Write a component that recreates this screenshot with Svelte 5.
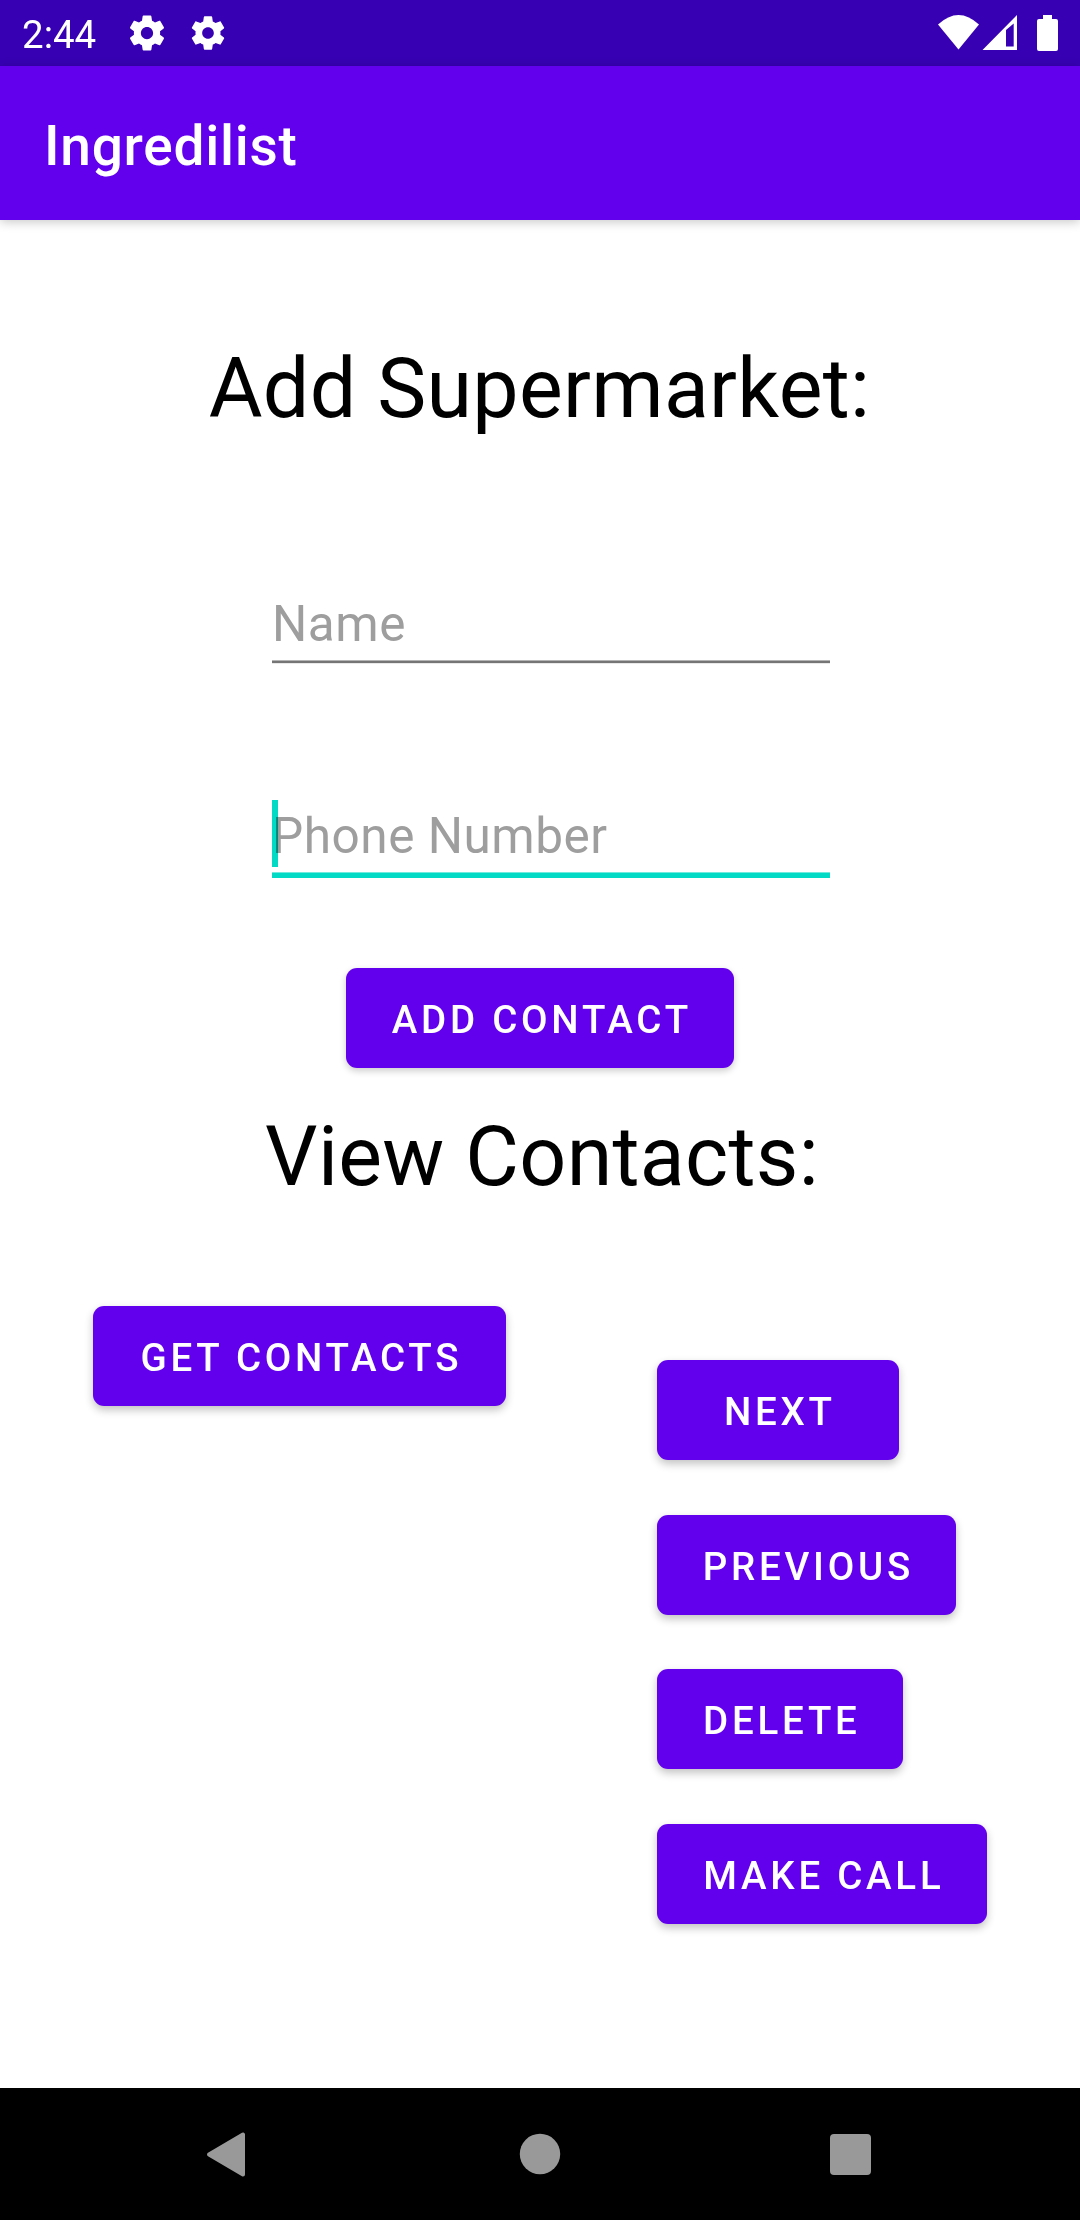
<script>
  let name = $state('');
  let phone = $state('');
  const actions = [
    { label: 'Next', kind: 'next' },
    { label: 'Previous', kind: 'previous' },
    { label: 'Delete', kind: 'delete' },
    { label: 'Make call', kind: 'call' }
  ];
  const gear =
    'M19.43 12.98c.04-.32.07-.64.07-.98s-.03-.66-.07-.98l2.11-1.65c.19-.15.24-.42.12-.64l-2-3.46c-.12-.22-.39-.3-.61-.22l-2.49 1c-.52-.4-1.08-.73-1.69-.98l-.38-2.65C14.46 2.18 14.25 2 14 2h-4c-.25 0-.46.18-.49.42l-.38 2.65c-.61.25-1.17.59-1.69.98l-2.49-1c-.23-.09-.49 0-.61.22l-2 3.46c-.13.22-.07.49.12.64l2.11 1.65c-.04.32-.07.65-.07.98s.03.66.07.98l-2.11 1.65c-.19.15-.24.42-.12.64l2 3.46c.12.22.39.3.61.22l2.49-1c.52.4 1.08.73 1.69.98l.38 2.65c.03.24.24.42.49.42h4c.25 0 .46-.18.49-.42l.38-2.65c.61-.25 1.17-.59 1.69-.98l2.49 1c.23.09.49 0 .61-.22l2-3.46c.12-.22.07-.49-.12-.64l-2.11-1.65zM12 15.5c-1.93 0-3.5-1.57-3.5-3.5s1.57-3.5 3.5-3.5 3.5 1.57 3.5 3.5-1.57 3.5-3.5 3.5z';
</script>

<div class="screen">
  <div class="status">
    <span class="time">2:44</span>
    <svg class="gear" viewBox="0 0 24 24"><path d={gear} /></svg>
    <svg class="gear small" viewBox="0 0 24 24"><path d={gear} /></svg>
    <svg class="system" viewBox="0 0 120 36">
      <path d="M0 9.5Q20.500 -9.500 41 9.500L20.500 34.500Z" />
      <path fill-rule="evenodd" d="M44.500 35L79 0V35ZM68 15V31.500H75.700V8.500Z" />
      <path d="M105 0H114V4H118Q120 4 120 6V34Q120 36 118 36H101Q99 36 99 34V6Q99 4 101 4H105Z" />
    </svg>
  </div>

  <header><h1>Ingredilist</h1></header>

  <main>
    <h2>Add Supermarket:</h2>
    <div class="field name">
      <input aria-label="Name" placeholder="Name" bind:value={name} />
    </div>
    <div class="field phone">
      <input aria-label="Phone Number" placeholder="Phone Number" bind:value={phone} />
      <i class="caret"></i>
    </div>
    <button class="add">Add contact</button>
    <h2 class="view">View Contacts:</h2>
    <div class="contacts">
      <button class="get">Get contacts</button>
      <div class="actions">
        {#each actions as action}
          <button class={action.kind}>{action.label}</button>
        {/each}
      </div>
    </div>
  </main>

  <nav>
    <svg viewBox="0 0 48 48"><path d="M37 4.500V44.500L3 24.500Z" stroke="#999" stroke-width="4" stroke-linejoin="round" /></svg>
    <svg viewBox="0 0 48 48"><circle cx="24" cy="24" r="20.2" /></svg>
    <svg viewBox="0 0 48 48"><rect x="4" y="4" width="41" height="41" rx="4" /></svg>
  </nav>
</div>

<style>
  :global(body) { margin: 0; background: #fff; }
  .screen {
    width: 1080px;
    height: 2220px;
    display: flex;
    flex-direction: column;
    overflow: hidden;
    background: #fff;
    font-family: Roboto, sans-serif;
  }
  .status {
    height: 66px;
    box-sizing: border-box;
    flex: none;
    display: flex;
    align-items: center;
    padding: 0 22px;
    background: #3700b3;
    color: #fff;
    fill: #fff;
  }
  .time { width: 103.500px; font-size: 38.500px; line-height: 46px; padding-top: 3px; }
  .gear { width: 42px; height: 42px; }
  .gear.small { width: 40px; height: 40px; margin-left: 20px; }
  .system { width: 120px; height: 36px; margin-left: auto; }
  header {
    height: 154px;
    flex: none;
    display: flex;
    align-items: center;
    padding: 6px 44px 0;
    box-sizing: border-box;
    background: #6200ee;
    color: #fff;
    box-shadow: 0 2px 10px rgba(0, 0, 0, .22);
  }
  h1 { margin: 0; font-size: 55px; line-height: 64px; font-weight: 500; letter-spacing: .750px; }
  main { height: 1868px; flex: none; display: flex; flex-direction: column; align-items: center; }
  h2 {
    margin: 114px 1px 0 0;
    height: 110px;
    font-size: 82.500px;
    line-height: 110px;
    font-weight: 400;
    letter-spacing: .300px;
    color: #000;
    white-space: nowrap;
  }
  .field { position: relative; width: 558px; margin-left: 22px; box-sizing: border-box; }
  .name {
    margin-top: 136px;
    height: 83px;
    border-bottom: 2px solid #757575;
    box-shadow: inset 0 -1px #b4b4b4, 0 1px #e9e9e9;
  }
  .phone { margin-top: 130px; height: 85px; border-bottom: 5px solid #03dac5; box-shadow: inset 0 -1px #72e9dd; }
  input {
    display: block;
    width: 100%;
    height: 67px;
    padding: 0;
    border: 0;
    outline: 0;
    background: transparent;
    font: 49.500px/67px Roboto, sans-serif;
    letter-spacing: .520px;
  }
  input::placeholder { color: #9e9e9e; opacity: 1; }
  .name input { margin-top: 11px; }
  .phone input { margin-top: 10px; }
  .caret { position: absolute; left: 0; top: 7px; width: 6px; height: 67px; background: #03dac5; mix-blend-mode: multiply; }
  button {
    height: 100px;
    padding: 3px 0 0 3.750px;
    border: 0;
    border-radius: 11px;
    background: #6200ee;
    color: #fff;
    font: 500 38.500px/50px Roboto, sans-serif;
    letter-spacing: 3.750px;
    text-transform: uppercase;
    white-space: nowrap;
    box-shadow: 0 4px 8px rgba(0, 0, 0, .24);
  }
  .add { margin-top: 90px; width: 388px; box-shadow: 0 3px 7px rgba(0, 0, 0, .2); }
  .view { margin: 34px 0 0 4px; }
  .contacts { width: 100%; box-sizing: border-box; padding: 94px 93px 0; display: flex; align-items: flex-start; }
  .get { width: 413px; }
  .actions { margin: 54px 0 0 151px; display: flex; flex-direction: column; align-items: flex-start; gap: 54px; }
  .next { width: 242px; }
  .previous { width: 299px; margin-top: 1px; }
  .delete { width: 246px; }
  .call { width: 330px; margin-top: 1px; }
  nav {
    flex: 1;
    display: flex;
    align-items: center;
    justify-content: center;
    gap: 262px;
    background: #000;
    fill: #999;
  }
  nav svg { width: 48px; height: 48px; }
</style>
